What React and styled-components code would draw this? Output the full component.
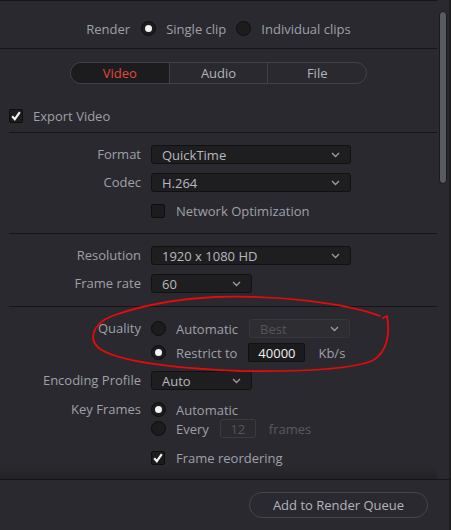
import React from "react";
import styled, { createGlobalStyle } from "styled-components";

const GlobalStyle = createGlobalStyle`
  html, body {
    margin: 0;
    padding: 0;
    background: #29292f;
  }
  body {
    font-family: "Open Sans", "Noto Sans", sans-serif;
    font-size: 13px;
  }
`;

const Window = styled.div`
  position: relative;
  width: 451px;
  height: 530px;
  box-sizing: border-box;
  background: #29292f;
  border-right: 2px solid #1d1d20;
  display: flex;
  flex-direction: column;
  overflow: hidden;
`;

const ScrollArea = styled.div`
  display: flex;
  height: 479px;
  border-bottom: 1px solid #161618;
`;

const Content = styled.div`
  position: relative;
  width: 437px;
  border-top: 1px solid #161618;
  box-sizing: border-box;

  &::after {
    content: "";
    position: absolute;
    left: 0;
    right: 0;
    bottom: 0;
    height: 14px;
    background: linear-gradient(rgba(0, 0, 0, 0), rgba(0, 0, 0, 0.18));
  }
`;

const Scrollbar = styled.div`
  flex: 1;
  padding: 11px 0 0 2px;
`;

const Thumb = styled.div`
  width: 6px;
  height: 171px;
  border-radius: 4px;
  background: #595b63;
  border: 1px solid #1a1a1d;
`;

const RenderBar = styled.div`
  height: 48px;
  padding-top: 8px;
  box-sizing: border-box;
  display: flex;
  align-items: center;
  justify-content: center;
  gap: 10px;
  color: #9a9ba5;
  border-bottom: 1px solid #161618;
`;

const Option = styled.span`
  margin-right: ${(p) => p.$mr || 0}px;
  color: #9fa0a8;
`;

const Radio = styled.span`
  width: 15px;
  height: 15px;
  flex: none;
  box-sizing: border-box;
  border-radius: 50%;
  border: 1px solid #0e0e10;
  background: #1c1c1f;
  display: inline-flex;
  align-items: center;
  justify-content: center;

  &::after {
    content: "";
    width: 7px;
    height: 7px;
    border-radius: 50%;
    background: #f2f2f2;
    display: ${(p) => (p.$on ? "block" : "none")};
  }
`;

const Tabs = styled.div`
  margin: 13px auto 0;
  width: 297px;
  height: 22px;
  box-sizing: border-box;
  border: 1px solid #414149;
  border-radius: 11px;
  display: flex;
  overflow: hidden;
`;

const Tab = styled.div`
  flex: 1;
  display: flex;
  align-items: center;
  justify-content: center;
  background: ${(p) => (p.$active ? "#1c1c1f" : "transparent")};
  color: ${(p) => (p.$active ? "#e4463a" : "#b4b4bc")};
  & + & {
    border-left: 1px solid #414149;
  }
`;

const ExportRow = styled.div`
  display: flex;
  align-items: center;
  gap: 10px;
  padding-left: 9px;
  margin-top: 25px;
  height: 14px;
  color: #9fa0a8;
`;

const Box = styled.span`
  width: 14px;
  height: 14px;
  flex: none;
  box-sizing: border-box;
  border-radius: 2px;
  border: 1px solid #0e0e10;
  background: #1c1c1f;
  display: inline-flex;
  align-items: center;
  justify-content: center;
`;

const Divider = styled.div`
  margin-left: 9px;
  border-top: 1px solid #161618;
  margin-top: ${(p) => p.$mt}px;
`;

const Section = styled.div`
  padding: ${(p) => p.$pt}px 0 0;
`;

const Row = styled.div`
  display: grid;
  grid-template-columns: 141px 1fr;
  column-gap: 10px;
  align-items: start;
  margin-top: ${(p) => p.$mt || 0}px;
`;

const Label = styled.div`
  height: 19px;
  line-height: 19px;
  text-align: right;
  color: #a0a0a8;
  white-space: nowrap;
`;

const Controls = styled.div`
  display: flex;
  flex-direction: column;
  gap: ${(p) => p.$gap || 0}px;
`;

const Line = styled.div`
  display: flex;
  align-items: center;
  height: 19px;
  white-space: nowrap;
`;

const SelectBox = styled.div`
  width: ${(p) => p.$w}px;
  height: 19px;
  box-sizing: border-box;
  border-radius: 3px;
  border: 1px solid ${(p) => (p.$disabled ? "#36363c" : "#111113")};
  background: ${(p) => (p.$disabled ? "#2d2d32" : "#1e1e21")};
  color: ${(p) => (p.$disabled ? "#55555c" : "#b8b8be")};
  display: flex;
  align-items: center;
  justify-content: space-between;
  padding: 0 10px 0 10px;
  margin-left: ${(p) => p.$ml || 0}px;
`;

const Field = styled.div`
  width: ${(p) => p.$w}px;
  height: 19px;
  box-sizing: border-box;
  border-radius: 2px;
  border: 1px solid ${(p) => (p.$disabled ? "#3a3a40" : "#111113")};
  background: ${(p) => (p.$disabled ? "#2a2a2f" : "#1b1b1e")};
  color: ${(p) => (p.$disabled ? "#55555c" : "#f0f0f0")};
  display: flex;
  align-items: center;
  justify-content: center;
  margin: 0 ${(p) => p.$mr || 0}px 0 ${(p) => p.$ml || 0}px;
`;

const Text = styled.span`
  margin-left: ${(p) => p.$ml || 0}px;
  color: ${(p) => (p.$muted ? "#5a5a61" : "#a0a0a8")};
`;

const Footer = styled.div`
  flex: 1;
  display: flex;
  justify-content: flex-end;
  align-items: flex-start;
  padding: 12px 21px 0 0;
`;

const QueueButton = styled.button`
  width: 179px;
  height: 26px;
  border-radius: 13px;
  border: 1px solid #45454c;
  background: transparent;
  color: #b4b4bc;
  font-family: inherit;
  font-size: 13px;
  padding: 0;
`;

const Annotation = styled.svg`
  position: absolute;
  left: 0;
  top: 0;
  pointer-events: none;
`;

const Chevron = () => (
  <svg width="9" height="6" viewBox="0 0 9 6">
    <path d="M1 1 L4.5 4.5 L8 1" fill="none" stroke="#9c9ca4" strokeWidth="1.3" />
  </svg>
);

const Check = () => (
  <svg width="12" height="12" viewBox="0 0 12 12">
    <path d="M2.2 6.3 L4.8 9.2 L9.8 2.2" fill="none" stroke="#f4f4f4" strokeWidth="2.1" />
  </svg>
);

const Select = ({ w, value, disabled, ml }) => (
  <SelectBox $w={w} $disabled={disabled} $ml={ml}>
    <span>{value}</span>
    <Chevron />
  </SelectBox>
);

export default function App() {
  return (
    <>
      <GlobalStyle />
      <Window>
        <ScrollArea>
          <Content>
            <RenderBar>
              <Option $mr={1}>Render</Option>
              <Radio $on />
              <Option>Single clip</Option>
              <Radio />
              <Option>Individual clips</Option>
            </RenderBar>

            <Tabs>
              <Tab $active>Video</Tab>
              <Tab>Audio</Tab>
              <Tab>File</Tab>
            </Tabs>

            <ExportRow>
              <Box>
                <Check />
              </Box>
              Export Video
            </ExportRow>
            <Divider $mt={9} />

            <Section $pt={12}>
              <Row>
                <Label>Format</Label>
                <Select w={200} value="QuickTime" />
              </Row>
              <Row $mt={9}>
                <Label>Codec</Label>
                <Select w={200} value="H.264" />
              </Row>
              <Row $mt={9}>
                <Label />
                <Line>
                  <Box />
                  <Text $ml={11}>Network Optimization</Text>
                </Line>
              </Row>
            </Section>
            <Divider $mt={13} />

            <Section $pt={12}>
              <Row>
                <Label>Resolution</Label>
                <Select w={200} value="1920 x 1080 HD" />
              </Row>
              <Row $mt={9}>
                <Label>Frame rate</Label>
                <Select w={101} value="60" />
              </Row>
            </Section>
            <Divider $mt={13} />

            <Section $pt={12}>
              <Row>
                <Label>Quality</Label>
                <Controls $gap={5}>
                  <Line>
                    <Radio />
                    <Text $ml={10}>Automatic</Text>
                    <Select w={101} value="Best" disabled ml={11} />
                  </Line>
                  <Line>
                    <Radio $on />
                    <Text $ml={10}>Restrict to</Text>
                    <Field $w={57} $ml={11}>40000</Field>
                    <Text $ml={13}>Kb/s</Text>
                  </Line>
                </Controls>
              </Row>
              <Row $mt={9}>
                <Label>Encoding Profile</Label>
                <Select w={101} value="Auto" />
              </Row>
              <Row $mt={10}>
                <Label>Key Frames</Label>
                <Controls>
                  <Line>
                    <Radio $on />
                    <Text $ml={10}>Automatic</Text>
                  </Line>
                  <Line>
                    <Radio />
                    <Text $ml={10}>Every</Text>
                    <Field $w={36} $ml={11} $disabled>12</Field>
                    <Text $ml={13} $muted>frames</Text>
                  </Line>
                </Controls>
              </Row>
              <Row $mt={10}>
                <Label />
                <Line>
                  <Box>
                    <Check />
                  </Box>
                  <Text $ml={11}>Frame reordering</Text>
                </Line>
              </Row>
            </Section>
          </Content>
          <Scrollbar>
            <Thumb />
          </Scrollbar>
        </ScrollArea>

        <Footer>
          <QueueButton>Add to Render Queue</QueueButton>
        </Footer>

        <Annotation width="451" height="530" viewBox="0 0 451 530">
          <path
            d="M380 316 C 345 303, 280 295, 215 297 C 175 299, 140 306, 112 316 C 92 324, 88 340, 100 349 C 120 362, 170 368, 240 371 C 300 372, 350 369, 372 361 C 388 352, 390 333, 387 316 L 383 318"
            fill="none"
            stroke="#e30b0b"
            strokeWidth="1.8"
            strokeLinecap="round"
          />
        </Annotation>
      </Window>
    </>
  );
}
